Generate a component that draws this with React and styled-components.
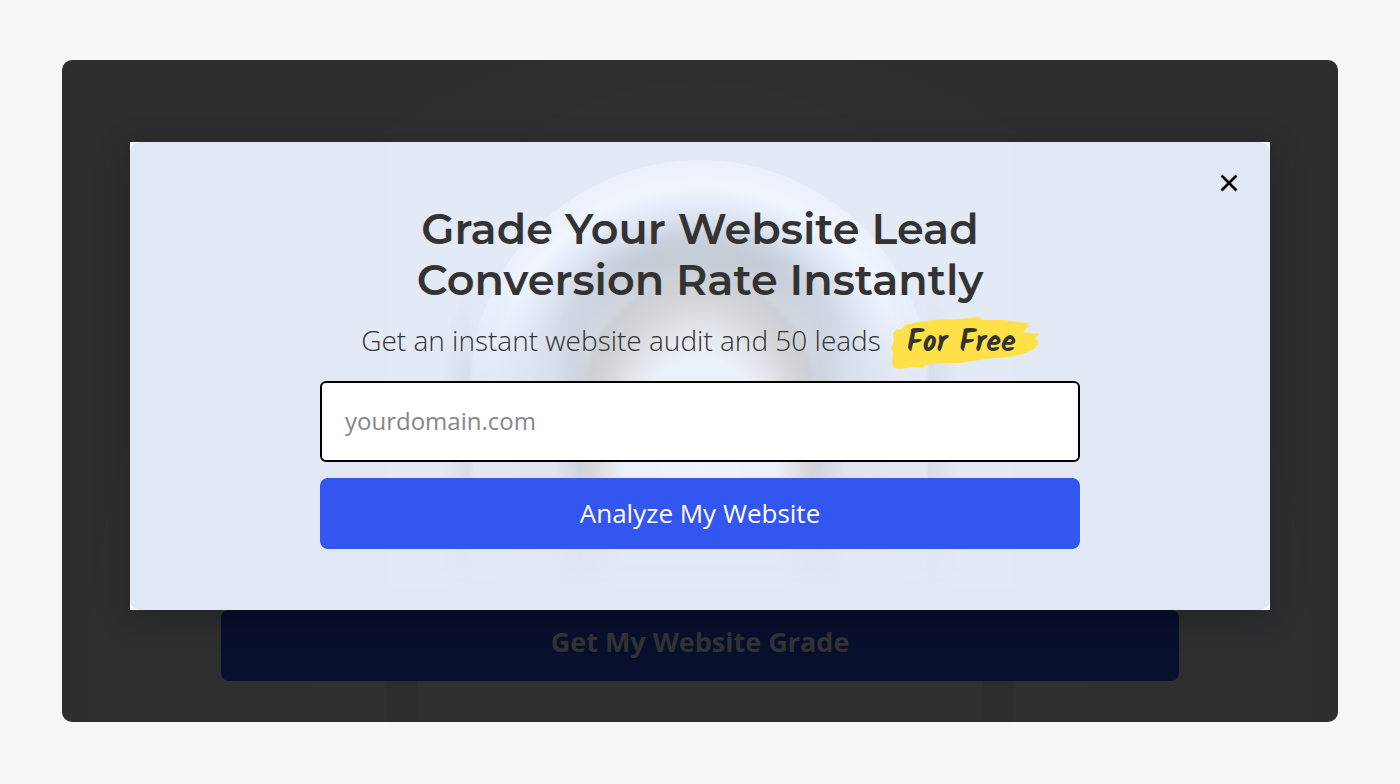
import React, { useState } from 'react'
import styled, { createGlobalStyle } from 'styled-components'

const App = () => {
  const [domain, setDomain] = useState('')

  return (
    <>
      <GlobalStyle />
      <Page>
        <Stage>
          <StageArch />
          <Dialog role="dialog" aria-labelledby="grader-title">
            <DialogPanel>
              <DialogArch />
              <CloseButton type="button" aria-label="Close">
                <CloseIcon viewBox="0 0 18 18" aria-hidden="true">
                  <path d="M1.5 1.5 L16.5 16.5 M16.5 1.5 L1.5 16.5" />
                </CloseIcon>
              </CloseButton>
              <Title id="grader-title">
                Grade Your Website Lead
                <br />
                Conversion Rate Instantly
              </Title>
              <Subtitle>
                Get an instant website audit and 50 leads
                <Highlight>
                  <BrushStroke />
                  <HighlightText>For Free</HighlightText>
                </Highlight>
              </Subtitle>
              <Form onSubmit={(e) => e.preventDefault()}>
                <DomainInput
                  type="text"
                  aria-label="Website domain"
                  placeholder="yourdomain.com"
                  value={domain}
                  onChange={(e) => setDomain(e.target.value)}
                />
                <SubmitButton type="submit">Analyze My Website</SubmitButton>
              </Form>
            </DialogPanel>
          </Dialog>
          <GradeButton type="button">Get My Website Grade</GradeButton>
        </Stage>
      </Page>
    </>
  )
}

export default App

const DialogArch = () => (
  <ArchSvg viewBox="0 0 1140 468" preserveAspectRatio="xMidYMin slice" aria-hidden="true">
    <defs>
      <radialGradient id="ring" gradientUnits="userSpaceOnUse" cx="570" cy="248" r="230">
        <stop offset="0.5" stopColor="#c8cdd5" />
        <stop offset="0.6" stopColor="#c6ccd6" />
        <stop offset="0.67" stopColor="#cbd1dd" />
        <stop offset="0.75" stopColor="#dce2ef" />
        <stop offset="0.83" stopColor="#e8eefa" />
        <stop offset="0.89" stopColor="#f0f5fd" />
        <stop offset="0.94" stopColor="#edf2fc" />
        <stop offset="1" stopColor="#ebf0fb" />
      </radialGradient>
      <linearGradient id="columns" gradientUnits="userSpaceOnUse" x1="310" x2="830" y1="0" y2="0">
        <stop offset="0" stopColor="#e2e9f5" />
        <stop offset="0.055" stopColor="#d6dce7" />
        <stop offset="0.065" stopColor="#e0e7f3" />
        <stop offset="0.22" stopColor="#dde3ef" />
        <stop offset="0.27" stopColor="#ced4de" />
        <stop offset="0.35" stopColor="#e2e9f5" />
        <stop offset="0.65" stopColor="#e2e9f5" />
        <stop offset="0.73" stopColor="#ced4de" />
        <stop offset="0.78" stopColor="#dde3ef" />
        <stop offset="0.935" stopColor="#e0e7f3" />
        <stop offset="0.94" stopColor="#d6dce7" />
        <stop offset="1" stopColor="#e2e9f5" />
      </linearGradient>
      <radialGradient
        id="door"
        gradientUnits="userSpaceOnUse"
        cx="0"
        cy="0"
        r="1"
        gradientTransform="translate(570 330) scale(126 196)"
      >
        <stop offset="0" stopColor="#ebf3fd" />
        <stop offset="0.58" stopColor="#ebf1fa" />
        <stop offset="0.74" stopColor="#e1e4e9" />
        <stop offset="0.87" stopColor="#d4d6d9" />
        <stop offset="1" stopColor="#cccfd4" />
      </radialGradient>
      <linearGradient id="fade" x1="0" x2="0" y1="0" y2="1">
        <stop offset="0" stopColor="#fff" stopOpacity="0" />
        <stop offset="0.3" stopColor="#fff" />
        <stop offset="0.6" stopColor="#fff" />
        <stop offset="0.85" stopColor="#fff" stopOpacity="0.25" />
        <stop offset="1" stopColor="#fff" stopOpacity="0.1" />
      </linearGradient>
      <linearGradient id="ringFade" x1="0" x2="0" y1="0" y2="1">
        <stop offset="0" stopColor="#fff" />
        <stop offset="0.4" stopColor="#fff" />
        <stop offset="0.95" stopColor="#fff" stopOpacity="0" />
      </linearGradient>
      <mask id="columnMask" maskUnits="userSpaceOnUse" x="0" y="150" width="1140" height="296">
        <rect x="0" y="150" width="1140" height="296" fill="url(#fade)" />
      </mask>
      <mask id="ringMask" maskUnits="userSpaceOnUse" x="0" y="18" width="1140" height="260">
        <rect x="0" y="18" width="1140" height="260" fill="url(#ringFade)" />
      </mask>
      <filter id="soft" x="-10%" y="-10%" width="120%" height="120%">
        <feGaussianBlur stdDeviation="2" />
      </filter>
    </defs>
    <rect x="258" width="625" height="446" fill="#e3eaf6" />
    <path
      d="M310 446 V248 A260 230 0 0 1 830 248 V446 Z"
      fill="url(#columns)"
      mask="url(#columnMask)"
    />
    <path
      d="M340 278 V248 A230 230 0 0 1 800 248 V278 Z"
      fill="url(#ring)"
      mask="url(#ringMask)"
    />
    <path
      d="M455 396 V248 A115 112 0 0 1 685 248 V396 Z"
      fill="url(#door)"
      filter="url(#soft)"
    />
  </ArchSvg>
)

const StageArch = () => (
  <ArchSvg viewBox="0 0 1276 662" preserveAspectRatio="xMidYMin slice" aria-hidden="true">
    <path d="M28 662 V600 A610 620 0 0 1 1248 600 V662 Z" fill="#2e2f31" />
    <path d="M250 662 V560 A388 540 0 0 1 1026 560 V662 Z" fill="#2f3032" />
    <path d="M325 620 H355 V662 H325 Z M921 620 H951 V662 H921 Z" fill="#2c2d2f" />
  </ArchSvg>
)

const BrushStroke = () => (
  <BrushSvg viewBox="0 0 148 52" preserveAspectRatio="none" aria-hidden="true">
    <path
      d="M2 16 L5 13 L11 12 L14 8 L26 5 L45 3 L68 2 L88 0 L91 3 L112 3 L126 5 L138 6
        L135 8 L139 9 L136 11 L132 15 L139 16 L148 17 L144 21 L147 24 L147 27 L143 32
        L132 37 L118 40 L104 41 L88 43 L70 46 L48 46 L35 48 L31 51 L20 50 L10 52 L3 51
        L1 47 L2 36 L0 31 L3 24 Z"
    />
  </BrushSvg>
)

const GlobalStyle = createGlobalStyle`
  *, *::before, *::after {
    box-sizing: border-box;
  }

  body {
    margin: 0;
    background: #f5f7f9;
    font-family: "Open Sans", "Noto Sans", sans-serif;
  }
`

const Page = styled.main`
  padding: 60px 62px;
`

const Stage = styled.section`
  position: relative;
  display: flex;
  flex-direction: column;
  align-items: center;
  padding: 82px 68px 41px;
  border-radius: 10px;
  background: #2d2e30;
  overflow: hidden;
`

const ArchSvg = styled.svg`
  position: absolute;
  inset: 0;
  width: 100%;
  height: 100%;
`

const Dialog = styled.div`
  position: relative;
  z-index: 1;
  width: 100%;
  background: #fff;
  box-shadow: 0 8px 32px rgba(0, 0, 0, 0.25);
`

const DialogPanel = styled.div`
  position: relative;
  display: flex;
  flex-direction: column;
  align-items: center;
  padding: 61px 24px;
  border-radius: 10px;
  background: #e2e9f5;
  overflow: hidden;
`

const CloseButton = styled.button`
  position: absolute;
  top: 24px;
  right: 24px;
  display: flex;
  padding: 8px;
  border: 0;
  background: none;
  cursor: pointer;
`

const CloseIcon = styled.svg`
  width: 18px;
  height: 18px;
  fill: none;
  stroke: #000;
  stroke-width: 2.6;
`

const Title = styled.h1`
  position: relative;
  margin: 0;
  color: #333;
  font-family: Montserrat, Inter, sans-serif;
  font-size: 43px;
  font-weight: 600;
  line-height: 51px;
  text-align: center;
`

const Subtitle = styled.p`
  position: relative;
  display: flex;
  gap: 10px;
  margin: 12px 0;
  color: #333;
  font-size: 28px;
  font-weight: 300;
  line-height: 46px;
`

const Highlight = styled.strong`
  position: relative;
  width: 148px;
  height: 52px;
  padding-left: 16px;
  color: #333;
`

const BrushSvg = styled.svg`
  position: absolute;
  inset: 0;
  width: 100%;
  height: 100%;
  fill: #ffe047;
`

const HighlightText = styled.span`
  position: relative;
  font-family: Kalam, "Caveat Brush", Lato, sans-serif;
  font-size: 30px;
  font-weight: 700;
`

const Form = styled.form`
  position: relative;
  display: flex;
  flex-direction: column;
  gap: 16px;
  width: 100%;
  max-width: 760px;
`

const DomainInput = styled.input`
  width: 100%;
  height: 81px;
  padding: 0 23px 2px;
  border: 2px solid #000;
  border-radius: 6px;
  background: #fff;
  color: #333;
  font-family: inherit;
  font-size: 24px;
  outline: none;

  &::placeholder {
    color: #85868a;
  }
`

const SubmitButton = styled.button`
  height: 71px;
  padding: 0 24px 2px;
  border: 0;
  border-radius: 8px;
  background: #3355f0;
  color: #fff;
  font-family: inherit;
  font-size: 26px;
  cursor: pointer;
`

const GradeButton = styled.button`
  position: relative;
  width: 84%;
  height: 71px;
  padding: 0 24px 8px;
  border: 0;
  border-radius: 8px;
  background: #09102e;
  color: #333;
  font-family: inherit;
  font-size: 27px;
  font-weight: 700;
  cursor: pointer;
`
